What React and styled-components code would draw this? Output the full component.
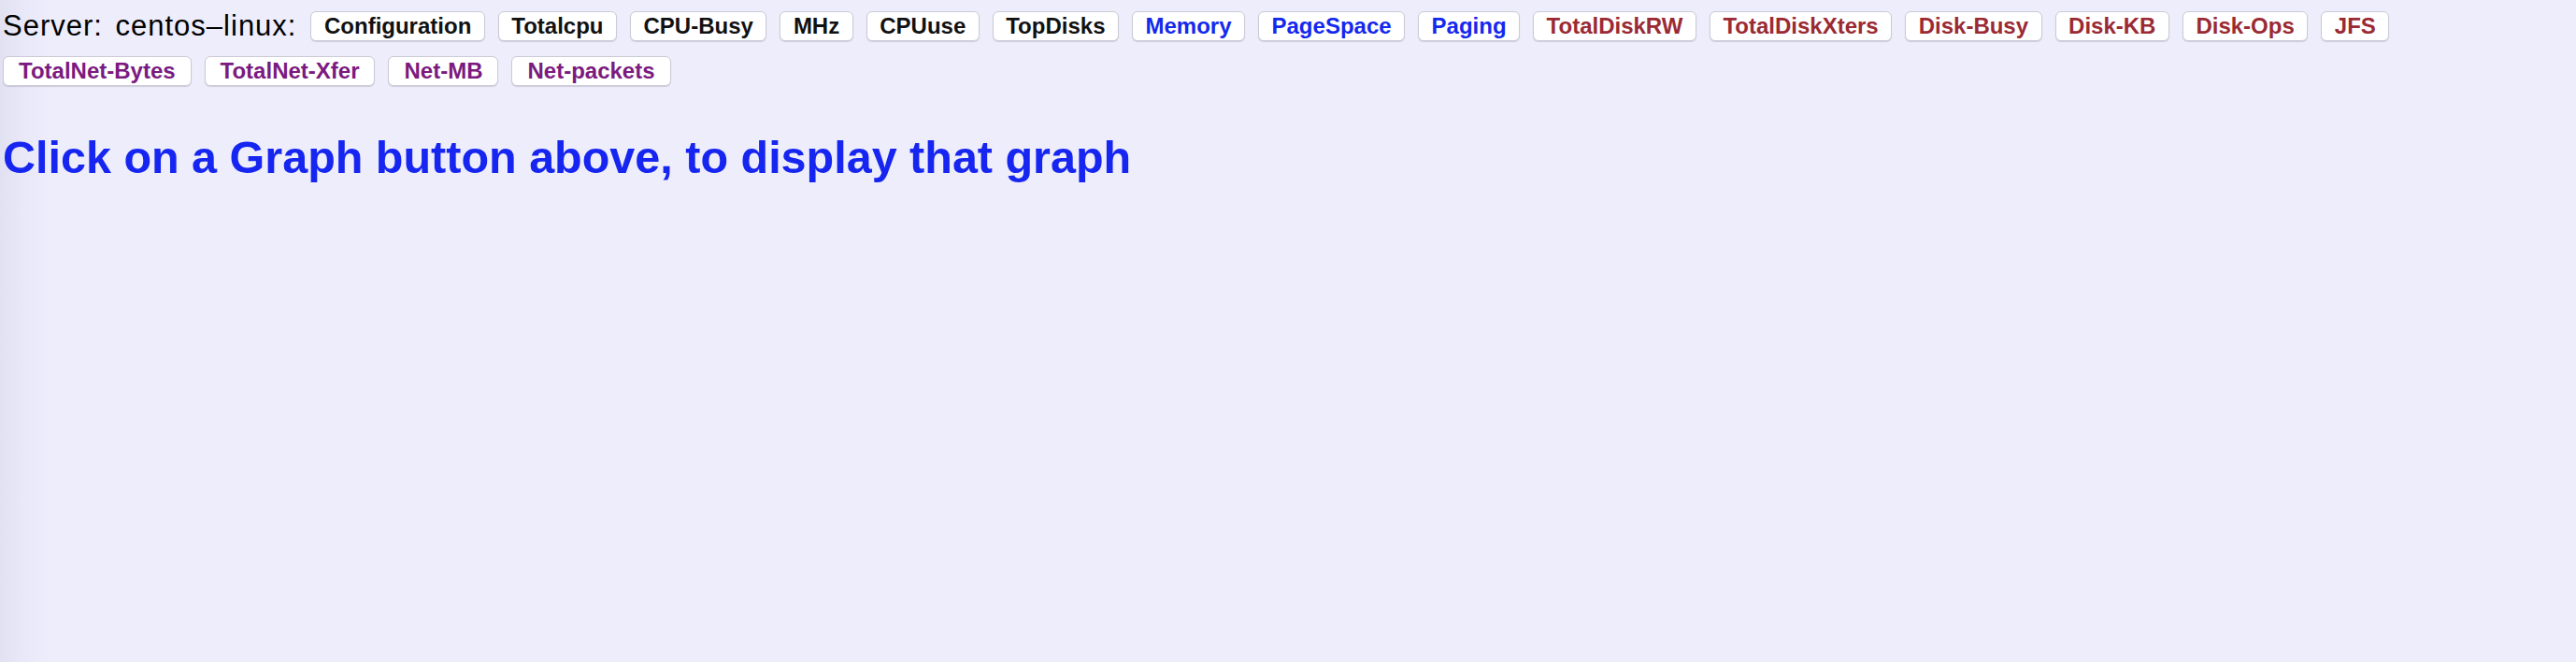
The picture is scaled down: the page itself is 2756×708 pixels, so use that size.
import React from 'react';
import styled, { createGlobalStyle } from 'styled-components';

const GlobalStyle = createGlobalStyle`
  html, body {
    margin: 0;
    padding: 0;
    min-height: 100%;
  }
  body {
    background: linear-gradient(to right, #e2e1f1 0px, #e9e8f8 24px, #eeedfc 56px, #eeedfc 100%);
    font-family: "Liberation Sans", Arial, sans-serif;
    min-height: 708px;
  }
`;

const colors = {
  black: '#111111',
  blue: '#1428ee',
  red: '#9a2a33',
  purple: '#7b1a7f',
};

const Page = styled.div`
  padding: 10px 3px 0 3px;
`;

const Toolbar = styled.div`
  display: flex;
  flex-wrap: wrap;
  align-items: center;
  column-gap: 14px;
  row-gap: 14px;
  margin-top: ${props => props.$offset || 0}px;
`;

const ServerLabel = styled.span`
  font-size: 31px;
  color: #000;
  letter-spacing: 1px;
  word-spacing: 4px;
  margin-right: 1px;
  white-space: nowrap;
`;

const GraphButton = styled.button`
  height: 32px;
  padding: 0 ${props => (props.$tone === 'purple' ? 16 : 13.5)}px;
  background: #ffffff;
  border: 1px solid #cbcad6;
  border-radius: 6px;
  box-shadow: 0 1px 1px rgba(60, 60, 90, 0.18);
  font-family: "Liberation Sans", Arial, sans-serif;
  font-weight: bold;
  font-size: 24px;
  line-height: 30px;
  color: ${props => colors[props.$tone] || colors.black};
  cursor: pointer;
`;

const Prompt = styled.h1`
  margin: 48px 0 0 0;
  font-size: 48.5px;
  font-weight: bold;
  color: #1626f0;
`;

const buttons = [
  ['Configuration', 'black'],
  ['Totalcpu', 'black'],
  ['CPU-Busy', 'black'],
  ['MHz', 'black'],
  ['CPUuse', 'black'],
  ['TopDisks', 'black'],
  ['Memory', 'blue'],
  ['PageSpace', 'blue'],
  ['Paging', 'blue'],
  ['TotalDiskRW', 'red'],
  ['TotalDiskXters', 'red'],
  ['Disk-Busy', 'red'],
  ['Disk-KB', 'red'],
  ['Disk-Ops', 'red'],
  ['JFS', 'red'],
  ['TotalNet-Bytes', 'purple'],
  ['TotalNet-Xfer', 'purple'],
  ['Net-MB', 'purple'],
  ['Net-packets', 'purple'],
];

export default function App() {
  return (
    <Page>
      <GlobalStyle />
      <Toolbar>
        <ServerLabel>Server: centos–linux:</ServerLabel>
        {buttons.slice(0, 15).map(([name, tone]) => (
          <GraphButton key={name} $tone={tone}>
            {name}
          </GraphButton>
        ))}
      </Toolbar>
      <Toolbar $offset={14}>
        {buttons.slice(15).map(([name, tone]) => (
          <GraphButton key={name} $tone={tone}>
            {name}
          </GraphButton>
        ))}
      </Toolbar>
      <Prompt>Click on a Graph button above, to display that graph</Prompt>
    </Page>
  );
}
